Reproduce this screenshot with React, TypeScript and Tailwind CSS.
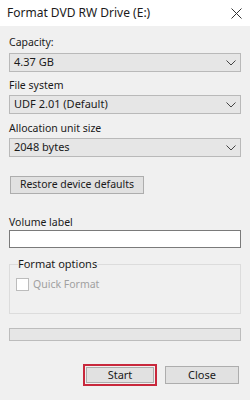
import React from 'react';

const font = { fontFamily: '"Noto Sans", "Open Sans", sans-serif' };

const Chevron: React.FC = () => (
  <svg width="10" height="6" viewBox="0 0 10 6" className="shrink-0">
    <path d="M0.5 0.5 L5 5 L9.5 0.5" fill="none" stroke="#444" strokeWidth="1" />
  </svg>
);

interface ComboProps {
  value: string;
}

const Combo: React.FC<ComboProps> = ({ value }) => (
  <div className="h-[19px] flex items-center justify-between border border-[#b9b9b9] bg-[#e6e6e6] pl-[4px] pr-[4px] text-[11px] text-[#1a1a1a]">
    <span>{value}</span>
    <Chevron />
  </div>
);

const Label: React.FC<{ text: string; className?: string }> = ({ text, className }) => (
  <div className={`h-[14px] leading-[14px] text-[10.5px] text-[#1a1a1a] ${className ?? ''}`}>{text}</div>
);

export default function App() {
  return (
    <div className="w-[250px] h-[400px] bg-[#f0f0f0] flex flex-col" style={font}>
      <div className="h-[26px] shrink-0 bg-white flex items-center justify-between pl-[7px] pr-[8px]">
        <span className="text-[12px] text-[#1a1a1a]">Format DVD RW Drive (E:)</span>
        <svg width="11" height="11" viewBox="0 0 11 11">
          <path d="M0.5 0.5 L10.5 10.5 M10.5 0.5 L0.5 10.5" stroke="#333" strokeWidth="1" />
        </svg>
      </div>

      <div className="px-[9px] flex flex-col">
        <Label text="Capacity:" className="mt-[9px] mb-[4px]" />
        <Combo value="4.37 GB" />

        <Label text="File system" className="mt-[6px] mb-[3px]" />
        <Combo value="UDF 2.01 (Default)" />

        <Label text="Allocation unit size" className="mt-[7px] mb-[3px]" />
        <Combo value="2048 bytes" />

        <button className="mt-[19px] ml-[1px] w-[134px] h-[18px] border border-[#adadad] bg-[#e1e1e1] text-[10.5px] text-[#1a1a1a] flex items-center justify-center">
          Restore device defaults
        </button>

        <Label text="Volume label" className="mt-[21px] mb-[1px]" />
        <div className="h-[18px] border border-[#7a7a7a] bg-white" />

        <fieldset className="mt-[9px] h-[57px] border border-[#dcdcdc] pl-[6px] pr-[6px] pb-[6px]">
          <legend className="ml-[2px] px-[0px] text-[11px] leading-[14px] text-[#1a1a1a]">Format options</legend>
          <div className="mt-[6px] flex items-center gap-[4px]">
            <div className="w-[13px] h-[13px] border border-[#bcbcbc] bg-white" />
            <span className="text-[10.5px] text-[#a0a0a0]">Quick Format</span>
          </div>
        </fieldset>

        <div className="mt-[14px] h-[13px] border border-[#bcbcbc] bg-[#e6e6e6]" />

        <div className="mt-[23px] flex justify-end items-center gap-[8px] pr-[2px]">
          <div className="w-[74px] h-[22px] border-2 border-[#c8283c] p-[1px]">
            <button className="w-full h-full border border-[#adadad] bg-[#e1e1e1] text-[11px] text-[#1a1a1a] flex items-center justify-center">
              Start
            </button>
          </div>
          <button className="w-[74px] h-[18px] border border-[#adadad] bg-[#e1e1e1] text-[11px] text-[#1a1a1a] flex items-center justify-center">
            Close
          </button>
        </div>
      </div>
    </div>
  );
}
